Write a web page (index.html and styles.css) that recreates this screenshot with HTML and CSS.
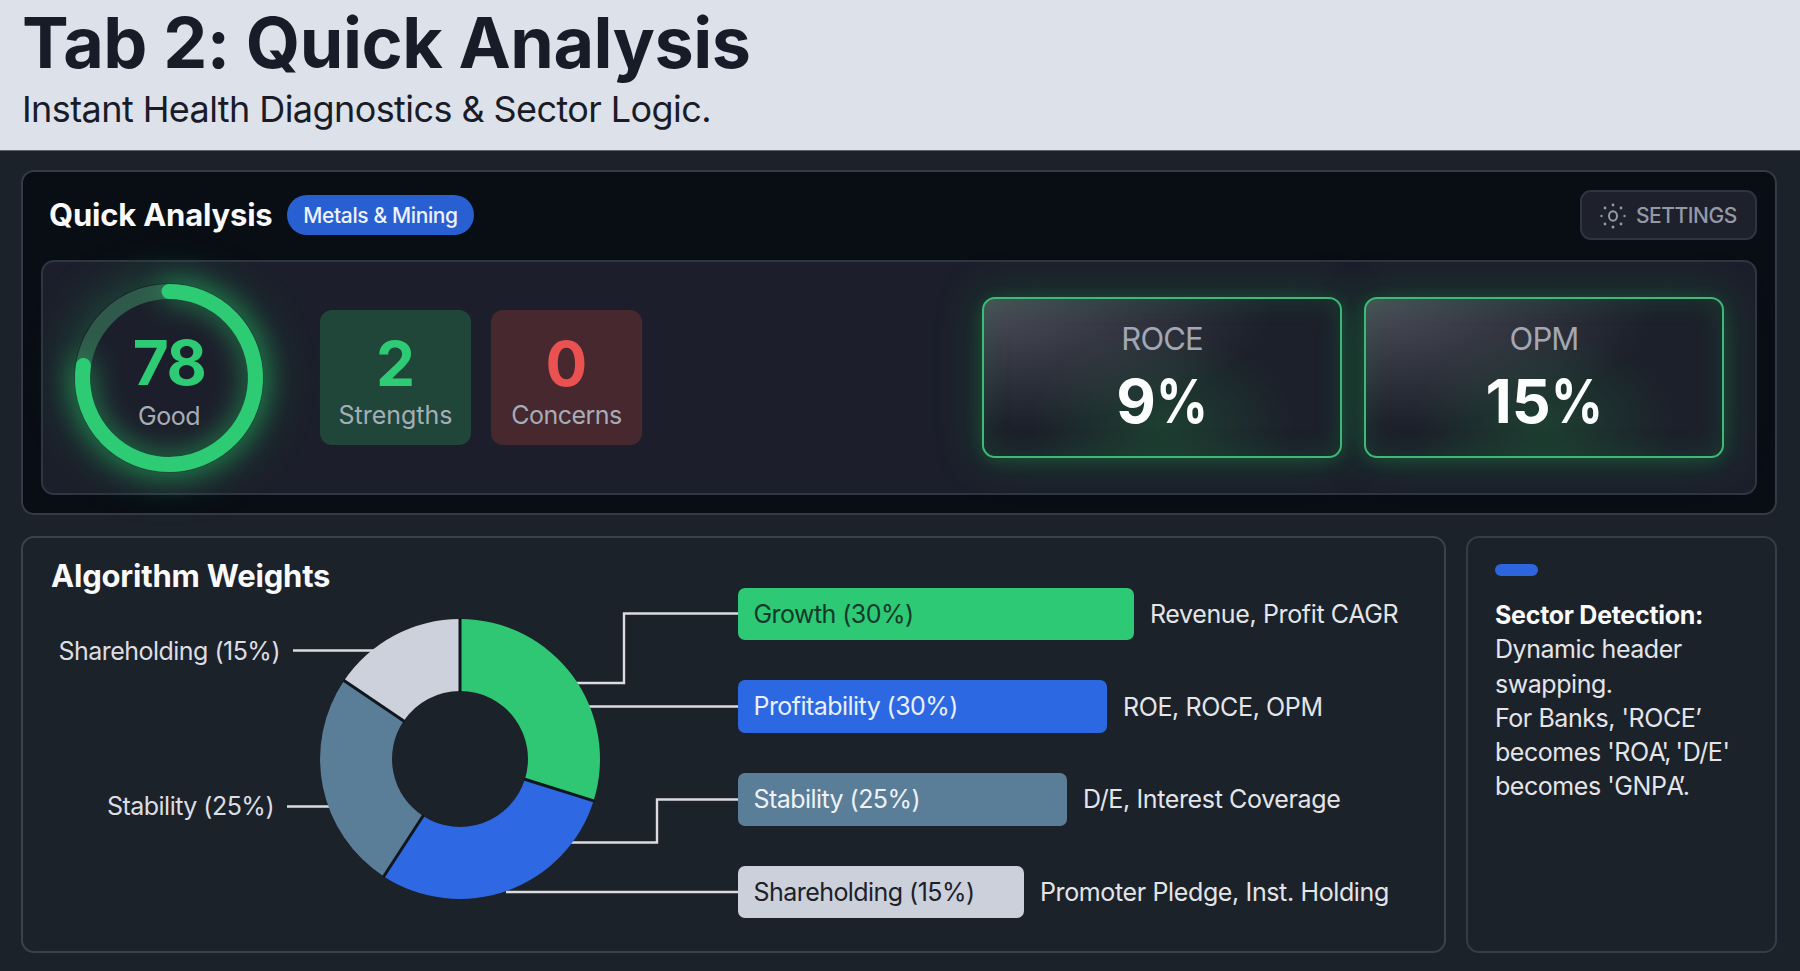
FILE: index.html
```html
<!DOCTYPE html>

<html lang="en-US">

<head>
  <title>Tab 2: Quick Analysis</title>
  <meta charset="utf-8">
  <link rel="stylesheet" href="styles.css">
</head>

<body>
  <header>
    <h1>Tab 2: Quick Analysis</h1>
    <p>Instant Health Diagnostics &amp; Sector Logic.</p>
  </header>

  <main>
    <section class="panel quick">
      <div class="toolbar">
        <h2>Quick Analysis</h2>
        <span class="pill">Metals &amp; Mining</span>
        <button type="button" class="settings">
          <svg width="26" height="26" viewBox="-13 -13 26 26">
            <ellipse rx="4" ry="4.8" fill="none" stroke="#9499a6" stroke-width="2" />
            <g fill="#9499a6">
              <circle cx="0" cy="-11" r="1.4" />
              <circle cx="8" cy="-8" r="1.4" />
              <circle cx="11.5" cy="0" r="1.2" />
              <circle cx="8" cy="8" r="1.4" />
              <circle cx="0" cy="11" r="1.5" />
              <circle cx="-8" cy="8" r="1.4" />
              <circle cx="-11.5" cy="0" r="1.2" />
              <circle cx="-8" cy="-8" r="1.4" />
            </g>
          </svg>
          <span>SETTINGS</span>
        </button>
      </div>

      <div class="summary">
        <div class="score">
          <svg class="ring" width="190" height="190" viewBox="-95 -95 190 190">
            <circle r="86.5" fill="none" stroke="#2f5a4b" stroke-width="15" />
            <path class="ring-value" d="M0 -86.500 A86.500 86.500 0 1 1 -85.600 -12.500" fill="none" stroke="#2dcb73" stroke-width="15" stroke-linecap="round" />
          </svg>
          <div class="score-text">
            <strong>78</strong>
            <span>Good</span>
          </div>
        </div>

        <div class="count good">
          <strong>2</strong>
          <span>Strengths</span>
        </div>
        <div class="count bad">
          <strong>0</strong>
          <span>Concerns</span>
        </div>

        <div class="metric first">
          <span>ROCE</span>
          <strong>9<i>%</i></strong>
        </div>
        <div class="metric">
          <span>OPM</span>
          <strong>15<i>%</i></strong>
        </div>
      </div>
    </section>

    <div class="bottom">
      <section class="panel weights">
        <div class="chart">
          <h2>Algorithm Weights</h2>
          <!-- Donut is centered on 0,0. Slices run clockwise from the top. -->
          <svg width="715" height="330" viewBox="-437 -159 715 330">
            <g class="leader">
              <path d="M-167 -108.500H-80" />
              <path d="M-173 47.500H-120" />
              <path d="M110 -76H164V-145.500H278" />
              <path d="M120 -52.500H278" />
              <path d="M105 83.500H197V40.500H278" />
              <path d="M46 133H278" />
            </g>
            <path fill="#2fc774" d="M0 -140A140 140 0 0 1 133.600 41.800L64.900 20.300A68 68 0 0 0 0 -68Z" />
            <path fill="#2e69e3" d="M133.600 41.800A140 140 0 0 1 -76.200 117.400L-37 57A68 68 0 0 0 64.900 20.300Z" />
            <path fill="#5a7d98" d="M-76.200 117.400A140 140 0 0 1 -116 -78.300L-56.400 -38A68 68 0 0 0 -37 57Z" />
            <path fill="#ccd1dc" d="M-116 -78.300A140 140 0 0 1 0 -140V-68A68 68 0 0 0 -56.400 -38Z" />
            <path class="gaps" d="M0 -141V-67M134.600 42.100L64 20M-76.800 118.200L-36.500 56.200M-116.800 -78.900L-55.500 -37.500" />
            <g class="chart-label" text-anchor="end">
              <text x="-180" y="-99.500">Shareholding (15%)</text>
              <text x="-186" y="56">Stability (25%)</text>
            </g>
          </svg>
        </div>

        <div class="bars">
          <div class="row"><div class="bar growth" style="width: 396px">Growth (30%)</div>Revenue, Profit CAGR</div>
          <div class="row"><div class="bar profitability" style="width: 369px">Profitability (30%)</div>ROE, ROCE, OPM</div>
          <div class="row"><div class="bar stability" style="width: 329px">Stability (25%)</div>D/E, Interest Coverage</div>
          <div class="row"><div class="bar shareholding" style="width: 286px">Shareholding (15%)</div>Promoter Pledge, Inst. Holding</div>
        </div>
      </section>

      <aside class="panel sector">
        <div class="accent"></div>
        <p>
          <b>Sector Detection:</b><br>
          Dynamic header<br>
          swapping.<br>
          For Banks, 'ROCE’<br>
          becomes 'RO<span class="tight">A',</span> 'D/E'<br>
          becomes 'GNP<span class="tight">A’</span>.
        </p>
      </aside>
    </div>
  </main>
</body>

</html>
```
FILE: styles.css
```css
* {
  box-sizing: border-box;
}

body {
  background-color: #1c222a;
  color: #e4e5e8;
  font-family: Inter, sans-serif;
  font-size: 25px;
  margin: 0;
  height: 971px;
  overflow: hidden;
}

h1, h2, p {
  margin: 0;
}

header {
  background-color: #dde1e9;
  border-bottom: 1px solid #5d636c;
  color: #191c28;
  height: 151px;
  padding: 0 22px;
}

h1 {
  font-size: 70px;
  font-weight: 700;
  letter-spacing: -0.450px;
  line-height: 86px;
}

header p {
  font-size: 36px;
  letter-spacing: -0.580px;
  line-height: 46px;
}

main {
  display: flex;
  flex-direction: column;
  gap: 21px;
  padding: 19px 23px 0 21px;
}

.panel {
  border: 2px solid #343a47;
  border-radius: 13px;
}

h2 {
  color: #fafafa;
  font-size: 31px;
  font-weight: 700;
  letter-spacing: -0.200px;
  line-height: 40px;
}

/* Top panel */
.quick {
  background-color: #090d14;
  height: 345px;
  padding: 18px 18px 0;
}

.toolbar {
  display: flex;
  align-items: center;
  height: 50px;
  padding-left: 8px;
}

.toolbar h2 {
  width: 223px;
  white-space: nowrap;
}

.pill {
  background-color: #2860d2;
  border-radius: 20px;
  color: #eef2fb;
  font-size: 21px;
  font-weight: 500;
  height: 40px;
  letter-spacing: -0.380px;
  line-height: 41px;
  margin-left: 15px;
  text-align: center;
  width: 187px;
}

.settings {
  display: flex;
  align-items: center;
  gap: 10px;
  background-color: #1e202b;
  border: 2px solid #2f3441;
  border-radius: 11px;
  color: #9499a6;
  font: 500 21px Inter, sans-serif;
  letter-spacing: -0.450px;
  height: 50px;
  margin-left: auto;
  padding: 1px 0 0 18px;
  width: 177px;
}

.summary {
  display: flex;
  align-items: center;
  background-color: #1c1f2b;
  border: 2px solid #2f3541;
  border-radius: 13px;
  height: 235px;
  margin-top: 20px;
  padding: 0 31px 0 31px;
}

.score {
  display: grid;
  place-items: center;
  border-radius: 50%;
  box-shadow: 0 0 50px rgba(32, 170, 90, 0.42);
  height: 190px;
  width: 190px;
}

.score > * {
  grid-area: 1 / 1;
}

.ring {
  overflow: visible;
}

.ring-value {
  filter: drop-shadow(0 0 14px rgba(35, 190, 98, 0.8));
}

.score-text,
.count,
.metric {
  display: flex;
  flex-direction: column;
  align-items: center;
}

.score-text strong,
.count strong {
  font-size: 62px;
  line-height: 62px;
  font-weight: 700;
}

.score-text span,
.count span {
  color: #a6adb7;
  line-height: 40px;
}

.score-text {
  color: #2dcb73;
  padding-top: 12px;
}

.score-text strong {
  letter-spacing: -1.500px;
}

.score-text span {
  letter-spacing: -0.500px;
  padding-top: 2px;
}

.count {
  border-radius: 12px;
  height: 135px;
  margin-left: 20px;
  padding-top: 23px;
  width: 151px;
}

.count.good {
  background-color: #204539;
  color: #2dcb73;
  margin-left: 56px;
}

.count.bad {
  background-color: #47282f;
  color: #ea5150;
}

.count.bad span {
  letter-spacing: -0.500px;
}

.metric {
  background-color: #1c202b;
  background-image:
    radial-gradient(ellipse at 0 0, rgba(125, 125, 135, 0.5), transparent 58%),
    radial-gradient(ellipse at 50% 80%, rgba(31, 80, 52, 0.65), transparent 52%);
  border: 2px solid #3cbb76;
  border-radius: 13px;
  box-shadow: 0 0 44px rgba(28, 125, 66, 0.4), 0 3px 16px rgba(28, 125, 66, 0.36), inset 0 0 26px rgba(28, 125, 66, 0.28);
  height: 161px;
  margin-left: 22px;
  padding-top: 20px;
  width: 360px;
}

.metric.first {
  margin-left: auto;
}

.metric span {
  color: #a2a7b3;
  font-size: 31px;
  letter-spacing: -0.900px;
  line-height: 40px;
}

.metric strong {
  color: #fcfefd;
  font-size: 61px;
  font-weight: 700;
  line-height: 84px;
}

/* The percent sign is set narrower than the digits. */
.metric i {
  display: inline-block;
  font-style: normal;
  margin-right: -10px;
  transform: scaleX(0.840);
  transform-origin: left;
}

/* Bottom panels */
.bottom {
  display: flex;
  gap: 20px;
}

.weights {
  display: flex;
  border-color: #3a424f;
  height: 417px;
  width: 1425px;
}

.chart {
  padding-top: 18px;
}

.chart h2 {
  padding-left: 28px;
}

.chart svg {
  display: block;
  margin-top: 4px;
  overflow: visible;
}

.leader {
  fill: none;
  stroke: #dcdce0;
  stroke-width: 2.400;
}

.gaps {
  fill: none;
  stroke: #10171e;
  stroke-width: 3;
}

.chart-label {
  fill: #dddee2;
  letter-spacing: -0.520px;
}

.bars {
  display: flex;
  flex-direction: column;
  gap: 40.250px;
  padding-top: 49.500px;
}

.row {
  display: flex;
  align-items: center;
  gap: 16px;
  letter-spacing: -0.370px;
  white-space: nowrap;
}

.bar {
  border-radius: 7px;
  height: 52.500px;
  letter-spacing: -0.550px;
  line-height: 52px;
  padding-left: 15.500px;
}

.growth {
  background-color: #2dc974;
  color: #14392c;
}

.profitability {
  background-color: #2c68e2;
  color: #e9effb;
}

.stability {
  background-color: #5a7d98;
  color: #eef2f6;
}

.shareholding {
  background-color: #cbd0db;
  color: #1d212a;
}

.sector {
  border-color: #343d49;
  flex: 1;
  padding: 26px 0 0 27px;
}

.accent {
  background-color: #2d66dc;
  border-radius: 6px;
  height: 12px;
  width: 43px;
}

.sector p {
  letter-spacing: -0.450px;
  line-height: 34.300px;
  margin-top: 22px;
}

.sector b {
  color: #fafafa;
  font-weight: 700;
  letter-spacing: -0.280px;
}

.tight {
  letter-spacing: -2.500px;
}
```
